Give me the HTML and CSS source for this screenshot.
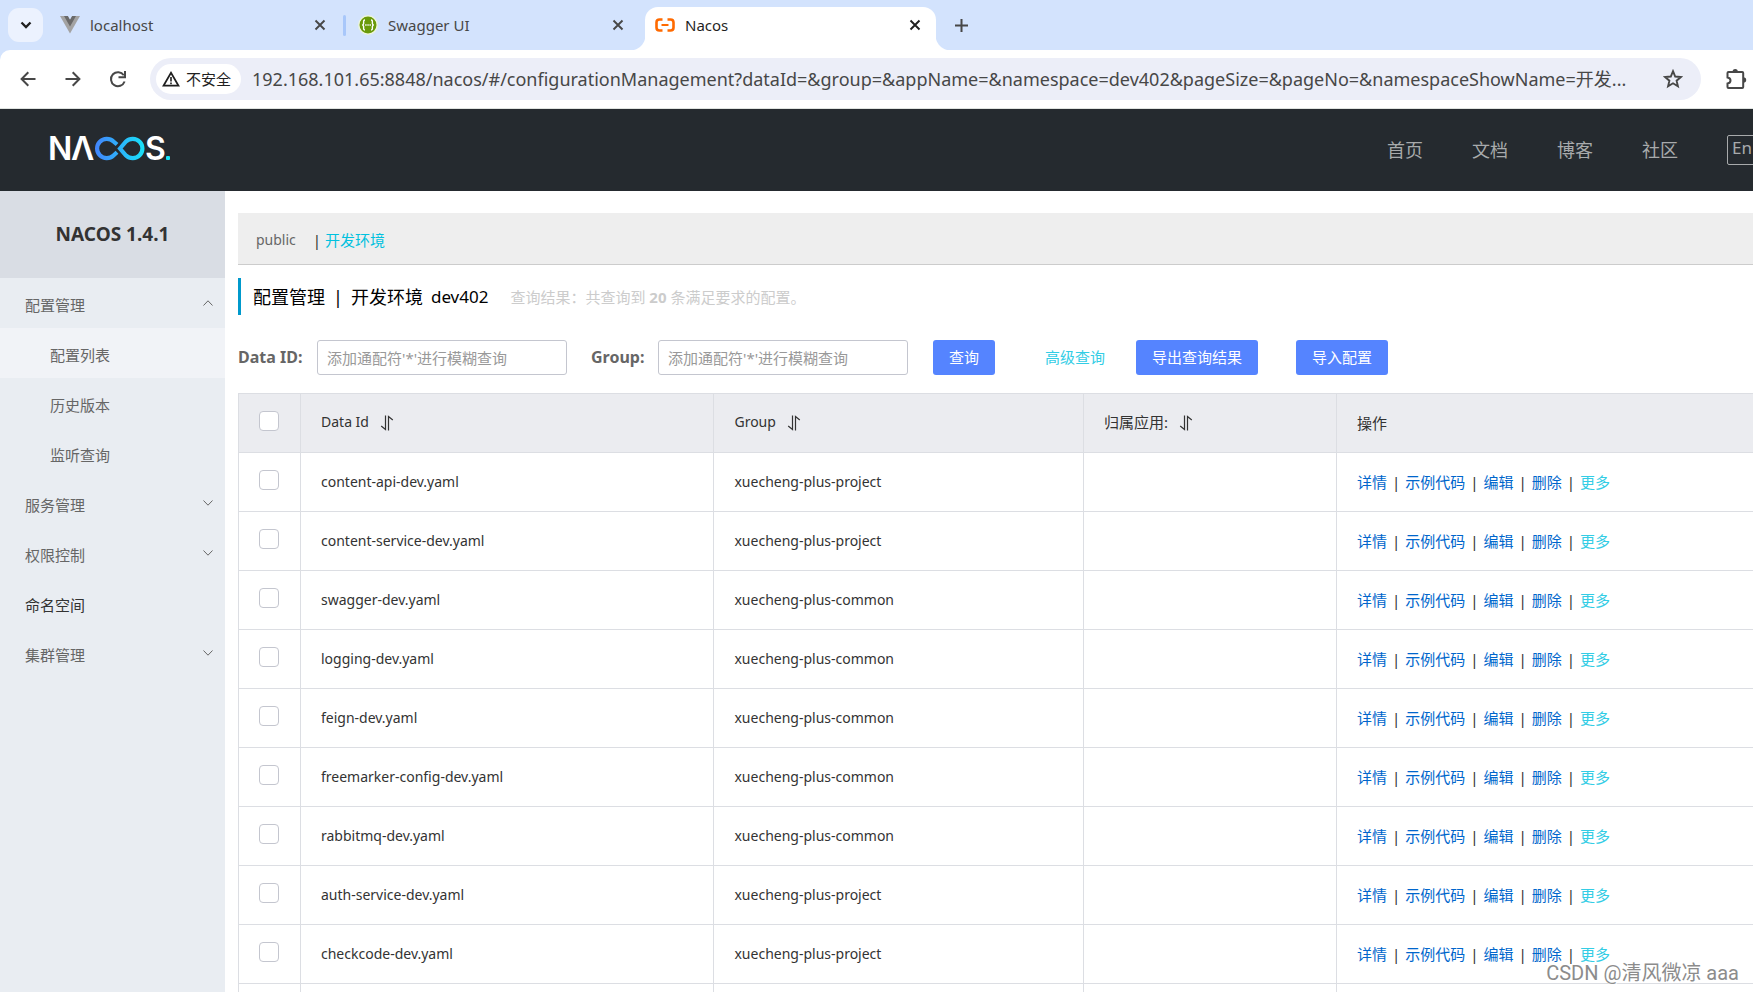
FILE: index.html
```html
<!DOCTYPE html>
<html lang="zh-CN">
<head>
<meta charset="utf-8">
<title>Nacos</title>
<link rel="stylesheet" href="styles.css">
</head>
<body>
<svg class="defs" aria-hidden="true">
  <symbol id="close" viewBox="0 0 12 12"><path d="M1.5 1.5l9 9M10.5 1.5l-9 9" fill="none" stroke="currentColor" stroke-width="1.9"/></symbol>
  <symbol id="sort" viewBox="0 0 14 16"><path d="M5.500 0.500v14L1.200 11M8.500 15.500v-14L12.800 5" fill="none" stroke="currentColor" stroke-width="1.200"/></symbol>
  <symbol id="chevron" viewBox="0 0 10 6"><path d="M0.500 0.500L5 5.200L9.500 0.500" fill="none" stroke="currentColor" stroke-width="1"/></symbol>
</svg>

<div class="tabs">
  <button class="tab-search" aria-label="搜索标签页"><svg width="12" height="8" viewBox="0 0 12 8"><path d="M1.500 1.500L6 6l4.500-4.500" fill="none" stroke="currentColor" stroke-width="2.300"/></svg></button>
  <div class="tab tab-first">
    <svg class="favicon" viewBox="0 0 20 20"><path d="M0 1h20L10 18.500z" fill="#a3a3a3"/><path d="M4 1h4l2 3.500L12 1h4l-6 10.500z" fill="#6a6a6a"/><path d="M8 1h4l-2 3.500z" fill="#d3e3fd"/></svg>
    <span class="tab-title">localhost</span>
    <button class="tab-close" aria-label="关闭"><svg><use href="#close"/></svg></button>
  </div>
  <div class="tab tab-second">
    <svg class="favicon" viewBox="0 0 20 20"><circle cx="10" cy="10" r="9.200" fill="#6a9a0a" stroke="#eef6dc" stroke-width="1.400"/><path d="M7 5C5 5 5.800 7 5.600 8.600Q5.400 10 4.200 10Q5.400 10 5.600 11.400C5.800 13 5 15 7 15M13 5c2 0 1.200 2 1.400 3.600Q14.600 10 15.800 10Q14.600 10 14.400 11.400C14.200 13 15 15 13 15" fill="none" stroke="#fff" stroke-width="1.400"/><path d="M7.200 10h1.400M9.400 10h1.300M11.500 10h1.400" stroke="#fff" stroke-width="1.400"/></svg>
    <span class="tab-title">Swagger UI</span>
    <button class="tab-close" aria-label="关闭"><svg><use href="#close"/></svg></button>
  </div>
  <div class="tab tab-active">
    <svg class="favicon" viewBox="0 0 20 20"><path d="M7.500 4.500H4.500Q1.500 4.500 1.500 7.500v5q0 3 3 3h3M12.500 4.500h3q3 0 3 3v5q0 3-3 3h-3" fill="none" stroke="#ff6a00" stroke-width="2.600"/><path d="M6.500 10h7" stroke="#ff6a00" stroke-width="2"/></svg>
    <span class="tab-title">Nacos</span>
    <button class="tab-close" aria-label="关闭"><svg><use href="#close"/></svg></button>
  </div>
  <button class="tab-new" aria-label="新标签页"><svg width="13" height="13" viewBox="0 0 13 13"><path d="M6.500 0v13M0 6.500h13" stroke="currentColor" stroke-width="2"/></svg></button>
</div>

<div class="toolbar">
  <button class="tool" aria-label="后退"><svg width="16" height="16" viewBox="0 0 16 16"><path d="M15.500 8H2M8.300 1.300L1.600 8l6.700 6.700" fill="none" stroke="currentColor" stroke-width="2"/></svg></button>
  <button class="tool" aria-label="前进"><svg width="16" height="16" viewBox="0 0 16 16"><path d="M0.500 8H14M7.700 1.300L14.400 8l-6.700 6.700" fill="none" stroke="currentColor" stroke-width="2"/></svg></button>
  <button class="tool" aria-label="刷新"><svg width="18" height="18" viewBox="0 0 18 18"><path d="M15.600 11.500A7 7 0 1 1 14.800 5.200" fill="none" stroke="currentColor" stroke-width="2"/><path d="M16 1v6.200H9.500" fill="none" stroke="currentColor" stroke-width="2"/></svg></button>
  <div class="omnibox">
    <button class="security"><svg width="18" height="16" viewBox="0 0 18 16"><path d="M9 1.800L16.500 14.700H1.500z" fill="none" stroke="currentColor" stroke-width="1.700"/><path d="M9 6v4.500M9 11.500v1.800" stroke="currentColor" stroke-width="1.600"/></svg>不安全</button>
    <input class="url" aria-label="地址" value="192.168.101.65:8848/nacos/#/configurationManagement?dataId=&amp;group=&amp;appName=&amp;namespace=dev402&amp;pageSize=&amp;pageNo=&amp;namespaceShowName=开发...">
    <button class="star" aria-label="收藏"><svg width="20" height="20" viewBox="0 0 20 20"><path d="M10 2.200l2.200 5.300 5.700.5-4.300 3.700 1.300 5.600-4.900-3-4.900 3 1.300-5.600L2.100 8l5.700-.5z" fill="none" stroke="currentColor" stroke-width="1.900"/></svg></button>
  </div>
  <button class="extensions" aria-label="扩展程序"><svg width="22" height="22" viewBox="0 0 22 22"><path d="M3.500 4h13.700q1 0 1 1v14q0 1-1 1H3.500q-1 0-1-1v-3.500q3-.5 3-3t-3-3V5q0-1 1-1z" fill="none" stroke="currentColor" stroke-width="2"/><path d="M7.500 4a2.700 3 0 0 1 5.400 0zM18.200 9.300a3 2.700 0 0 1 0 5.400z" fill="currentColor"/></svg></button>
</div>

<header class="site-header">
  <a class="logo" href="#" aria-label="Nacos">
    <svg width="128" height="48" viewBox="-4 -10 128 48">
      <defs><linearGradient id="loop" gradientUnits="userSpaceOnUse" x1="44" y1="0" x2="96" y2="0"><stop offset="0" stop-color="#4482fc"/><stop offset="1" stop-color="#16e4f8"/></linearGradient></defs>
      <text class="logo-text" x="-2" y="25">N</text>
      <text class="logo-text" x="21" y="25">Λ</text>
      <text class="logo-text" x="95" y="25">S</text>
      <path d="M67 9.500L63.500 6.500A9.700 9.700 0 1 0 63.500 20.500L67 17.300M70 13.500L76 6.500A9.700 9.700 0 1 1 76 20.500Z" fill="none" stroke="url(#loop)" stroke-width="4.200"/>
      <rect x="116" y="21" width="4" height="4" rx="1" fill="#16e4f8"/>
    </svg>
  </a>
  <nav class="site-nav">
    <a href="#">首页</a>
    <a href="#">文档</a>
    <a href="#">博客</a>
    <a href="#">社区</a>
    <button class="lang">En</button>
  </nav>
</header>

<div class="layout">
  <aside class="sidebar">
    <h1 class="product">NACOS 1.4.1</h1>
    <nav class="menu">
      <a class="item" href="#">配置管理<svg class="chevron up"><use href="#chevron"/></svg></a>
      <a class="item sub current" href="#">配置列表</a>
      <a class="item sub" href="#">历史版本</a>
      <a class="item sub" href="#">监听查询</a>
      <a class="item" href="#">服务管理<svg class="chevron"><use href="#chevron"/></svg></a>
      <a class="item" href="#">权限控制<svg class="chevron"><use href="#chevron"/></svg></a>
      <a class="item leaf" href="#">命名空间</a>
      <a class="item" href="#">集群管理<svg class="chevron"><use href="#chevron"/></svg></a>
    </nav>
  </aside>

  <main class="content">
    <div class="namespaces">
      <a class="ns ns-public" href="#">public</a>
      <span class="divider">|</span>
      <a class="ns ns-current" href="#">开发环境</a>
    </div>
    <div class="heading">
      <h2 class="heading-title"><span>配置管理</span><span>|</span><span>开发环境</span><span class="heading-id">dev402</span></h2>
      <p class="result">查询结果：共查询到 <strong>20</strong> 条满足要求的配置。</p>
    </div>
    <form class="search">
      <label class="label" for="data-id">Data ID:</label>
      <input class="field" id="data-id" type="text" placeholder="添加通配符'*'进行模糊查询">
      <label class="label label-group" for="group">Group:</label>
      <input class="field" id="group" type="text" placeholder="添加通配符'*'进行模糊查询">
      <button class="btn btn-query" type="button">查询</button>
      <a class="advanced" href="#">高级查询</a>
      <button class="btn btn-export" type="button">导出查询结果</button>
      <button class="btn btn-import" type="button">导入配置</button>
    </form>
    <table class="configs">
      <colgroup><col class="col-check"><col class="col-id"><col class="col-group"><col class="col-app"><col></colgroup>
      <thead>
        <tr>
          <th><input class="check" type="checkbox" aria-label="全选"></th>
          <th class="latin">Data Id<button class="sort" aria-label="排序"><svg><use href="#sort"/></svg></button></th>
          <th class="latin">Group<button class="sort" aria-label="排序"><svg><use href="#sort"/></svg></button></th>
          <th>归属应用:<button class="sort" aria-label="排序"><svg><use href="#sort"/></svg></button></th>
          <th>操作</th>
        </tr>
      </thead>
      <tbody>
        <tr><td><input class="check" type="checkbox" aria-label="content-api-dev.yaml"></td><td class="latin">content-api-dev.yaml</td><td class="latin">xuecheng-plus-project</td><td></td><td><div class="actions"><a href="#">详情</a><i>|</i><a href="#">示例代码</a><i>|</i><a href="#">编辑</a><i>|</i><a href="#">删除</a><i>|</i><a class="more" href="#">更多</a></div></td></tr>
        <tr><td><input class="check" type="checkbox" aria-label="content-service-dev.yaml"></td><td class="latin">content-service-dev.yaml</td><td class="latin">xuecheng-plus-project</td><td></td><td><div class="actions"><a href="#">详情</a><i>|</i><a href="#">示例代码</a><i>|</i><a href="#">编辑</a><i>|</i><a href="#">删除</a><i>|</i><a class="more" href="#">更多</a></div></td></tr>
        <tr><td><input class="check" type="checkbox" aria-label="swagger-dev.yaml"></td><td class="latin">swagger-dev.yaml</td><td class="latin">xuecheng-plus-common</td><td></td><td><div class="actions"><a href="#">详情</a><i>|</i><a href="#">示例代码</a><i>|</i><a href="#">编辑</a><i>|</i><a href="#">删除</a><i>|</i><a class="more" href="#">更多</a></div></td></tr>
        <tr><td><input class="check" type="checkbox" aria-label="logging-dev.yaml"></td><td class="latin">logging-dev.yaml</td><td class="latin">xuecheng-plus-common</td><td></td><td><div class="actions"><a href="#">详情</a><i>|</i><a href="#">示例代码</a><i>|</i><a href="#">编辑</a><i>|</i><a href="#">删除</a><i>|</i><a class="more" href="#">更多</a></div></td></tr>
        <tr><td><input class="check" type="checkbox" aria-label="feign-dev.yaml"></td><td class="latin">feign-dev.yaml</td><td class="latin">xuecheng-plus-common</td><td></td><td><div class="actions"><a href="#">详情</a><i>|</i><a href="#">示例代码</a><i>|</i><a href="#">编辑</a><i>|</i><a href="#">删除</a><i>|</i><a class="more" href="#">更多</a></div></td></tr>
        <tr><td><input class="check" type="checkbox" aria-label="freemarker-config-dev.yaml"></td><td class="latin">freemarker-config-dev.yaml</td><td class="latin">xuecheng-plus-common</td><td></td><td><div class="actions"><a href="#">详情</a><i>|</i><a href="#">示例代码</a><i>|</i><a href="#">编辑</a><i>|</i><a href="#">删除</a><i>|</i><a class="more" href="#">更多</a></div></td></tr>
        <tr><td><input class="check" type="checkbox" aria-label="rabbitmq-dev.yaml"></td><td class="latin">rabbitmq-dev.yaml</td><td class="latin">xuecheng-plus-common</td><td></td><td><div class="actions"><a href="#">详情</a><i>|</i><a href="#">示例代码</a><i>|</i><a href="#">编辑</a><i>|</i><a href="#">删除</a><i>|</i><a class="more" href="#">更多</a></div></td></tr>
        <tr><td><input class="check" type="checkbox" aria-label="auth-service-dev.yaml"></td><td class="latin">auth-service-dev.yaml</td><td class="latin">xuecheng-plus-project</td><td></td><td><div class="actions"><a href="#">详情</a><i>|</i><a href="#">示例代码</a><i>|</i><a href="#">编辑</a><i>|</i><a href="#">删除</a><i>|</i><a class="more" href="#">更多</a></div></td></tr>
        <tr><td><input class="check" type="checkbox" aria-label="checkcode-dev.yaml"></td><td class="latin">checkcode-dev.yaml</td><td class="latin">xuecheng-plus-project</td><td></td><td><div class="actions"><a href="#">详情</a><i>|</i><a href="#">示例代码</a><i>|</i><a href="#">编辑</a><i>|</i><a href="#">删除</a><i>|</i><a class="more" href="#">更多</a></div></td></tr>
        <tr><td></td><td></td><td></td><td></td><td></td></tr>
      </tbody>
    </table>
  </main>
</div>
<div class="watermark">CSDN @清风微凉 aaa</div>
</body>
</html>
```

FILE: styles.css
```css
* { box-sizing: border-box; }

body {
  margin: 0;
  height: 100vh;
  display: flex;
  flex-direction: column;
  overflow: hidden;
  background: #d3e3fd;
  color: #333;
  font: 15px/20px "Noto Sans", "Noto Sans CJK SC", sans-serif;
}

a { color: inherit; text-decoration: none; }
button { border: 0; padding: 0; background: none; color: inherit; font: inherit; display: flex; align-items: center; justify-content: center; }
input { font: inherit; color: inherit; }
h1, h2, p { margin: 0; }
svg { display: block; flex: none; }
.defs { position: absolute; width: 0; height: 0; }

/* Browser tabs */
.tabs { flex: none; display: flex; align-items: center; height: 50px; padding-left: 8px; background: #d3e3fd; color: #474747; }
.tab-search { width: 35px; height: 34px; border-radius: 11px; background: #ecf2fe; color: #1f1f1f; }
.tab { display: flex; align-items: center; height: 43px; gap: 10px; }
.tab-first { width: 301px; padding: 0 17px; }
.tab-second { width: 301px; padding: 0 20px 0 14px; }
.tab-second::before { content: ""; width: 3px; height: 21px; margin-left: -15px; margin-right: 2px; background: #a8c7fa; border-radius: 2px; }
.favicon { width: 20px; height: 20px; }
.tab-title { flex: 1; }
.tab-close { width: 14px; height: 20px; }
.tab-close svg { width: 12px; height: 12px; }
.tab-active { position: relative; align-self: flex-end; width: 291px; padding: 0 14px 7px 10px; border-radius: 13px 13px 0 0; background: #fff; color: #1f1f1f; }
.tab-active::before, .tab-active::after { content: ""; position: absolute; bottom: 0; width: 15px; height: 15px; }
.tab-active::before { left: -15px; background: radial-gradient(circle at 0 0, #d3e3fd 15px, #fff 16px); }
.tab-active::after { right: -15px; background: radial-gradient(circle at 100% 0, #d3e3fd 15px, #fff 16px); }
.tab-new { width: 50px; height: 34px; }

/* Browser toolbar */
.toolbar { flex: none; display: flex; align-items: center; height: 59px; padding: 0 6px 0 5px; border-bottom: 1px solid #dfe3e0; border-top-left-radius: 10px; background: #fff; color: #474747; }
.tool { width: 45px; height: 40px; }
.omnibox { flex: 1; display: flex; align-items: center; height: 42px; margin: 0 24px 0 10px; padding: 0 18px 0 6px; border-radius: 21px; background: #eceef8; }
.security { flex: none; gap: 6px; height: 30px; padding: 0 10px 0 6px; border-radius: 15px; background: #fff; color: #1f1f1f; }
.url { flex: 1; min-width: 0; height: 30px; padding: 0 0 2px; margin: 0 19px 0 11px; border: 0; outline: 0; background: none; font-size: 18px; }
.extensions { width: 22px; height: 22px; }

/* Site header */
.site-header { flex: none; display: flex; justify-content: space-between; height: 82px; padding-left: 46px; background: #252a2f; color: #a8aaac; overflow: hidden; }
.logo { padding-top: 16px; }
.logo-text { fill: #fff; font: 600 32px Inter, sans-serif; }
.site-nav { display: flex; align-items: center; gap: 49px; margin-right: -10px; font-size: 18px; }
.lang { justify-content: flex-start; width: 36px; height: 30px; padding: 0 0 4px 4px; border: 1px solid #a8aaac; border-radius: 2px; font-size: 17px; }

/* Sidebar */
.layout { flex: 1; min-height: 0; display: flex; }
.sidebar { flex: none; width: 225px; background: #e9edf2; }
.product { height: 87px; background: #d9dde4; font-size: 19px; line-height: 87px; text-align: center; }
.item { display: flex; align-items: center; justify-content: space-between; height: 50px; padding: 4px 12px 0 25px; color: #666; }
.sub { padding-left: 50px; }
.current { background: #f1f3f7; }
.leaf { color: #333; }
.chevron { width: 10px; height: 6px; margin-bottom: 4px; }
.up { transform: scaleY(-1); }

/* Main content */
.content { flex: 1; min-width: 0; padding: 22px 0 0 13px; background: #fff; }
.namespaces { display: flex; align-items: center; height: 52px; padding: 2px 18px 0; border-bottom: 1px solid #ccc; background: #eee; color: #666; }
.ns-public { font-size: 14px; }
.divider { margin: 0 4px 0 17px; color: #333; }
.ns-current { color: #00c1de; }
.heading { display: flex; align-items: center; gap: 22px; height: 37px; margin-top: 13px; padding-left: 12px; border-left: 3px solid #09c; }
.heading-title { display: flex; gap: 8px; color: #000; font-size: 18px; font-weight: 400; }
.heading-id { font-size: 17px; }
.result { color: #ccc; }
.search { display: flex; align-items: center; height: 35px; margin: 25px 0 18px; }
.label { flex: none; width: 79px; padding-bottom: 1px; color: #666; font-size: 16px; font-weight: 700; }
.label-group { width: 67px; margin-left: 24px; }
.field { width: 250px; height: 35px; padding: 0 9px; border: 1px solid #c4c6cf; border-radius: 3px; background: #fff; }
.field::placeholder { color: #999; opacity: 1; }
.btn { flex: none; height: 35px; padding: 0 16px 2px; border-radius: 3px; background: #5584ff; color: #fff; }
.btn-query { margin-left: 25px; }
.advanced { flex: none; margin: 0 31px 0 50px; padding-bottom: 2px; color: #33cde5; }
.btn-import { margin-left: 38px; }

.configs { width: 100%; table-layout: fixed; border-collapse: collapse; }
.col-check { width: 62px; }
.col-id { width: 27.3%; }
.col-group { width: 24.4%; }
.col-app { width: 16.7%; }
.configs th, .configs td { height: 59px; padding: 0 20px 1px; border: 1px solid #dcdee3; border-right-width: 0; text-align: left; font-weight: 400; }
.configs th { background: #ebecf0; }
.configs .latin { font-size: 14px; }
.check { appearance: none; display: block; width: 20px; height: 20px; margin: 0 0 4px; border: 1px solid #c4c6cf; border-radius: 4px; background: #fff; }
.sort { display: inline-flex; margin: 0 0 2px 11px; vertical-align: middle; }
.sort svg { width: 14px; height: 16px; }
.actions { display: flex; gap: 5px; color: #06c; white-space: nowrap; }
.actions i { color: #333; font-style: normal; }
.actions .more { color: #33cde5; }

.watermark { position: absolute; right: 14px; bottom: 5px; color: #8c8c8c; font: 20px/28px Roboto, "Noto Sans CJK SC", sans-serif; text-shadow: 1px 1px 0 #fff; }
```
